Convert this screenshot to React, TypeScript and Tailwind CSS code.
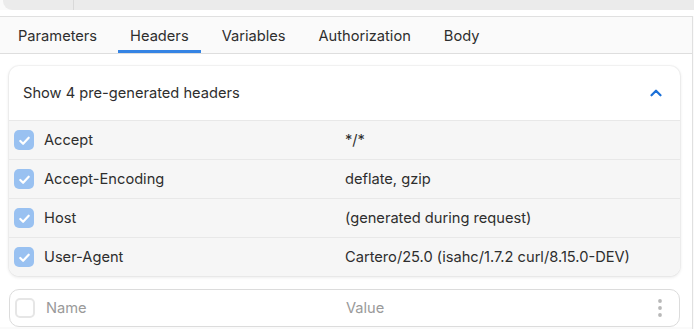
import React from 'react';
import { ChevronUp } from 'lucide-react';

// ─── Data ───────────────────────────────────────────────────────────────────

const tabs = ['Parameters', 'Headers', 'Variables', 'Authorization', 'Body'];

const generated = [
  { name: 'Accept', value: '*/*' },
  { name: 'Accept-Encoding', value: 'deflate, gzip' },
  { name: 'Host', value: '(generated during request)' },
  { name: 'User-Agent', value: 'Cartero/25.0 (isahc/1.7.2 curl/8.15.0-DEV)' },
];

// ─── Bits ───────────────────────────────────────────────────────────────────

function CheckBox({ checked }: { checked: boolean }) {
  if (!checked) {
    return <div className="h-5 w-5 shrink-0 rounded-[5px] border-2 border-[#e6e6e6] bg-white" />;
  }
  return (
    <div className="flex h-5 w-5 shrink-0 items-center justify-center rounded-[5px] bg-[#99c1f1]">
      <svg viewBox="0 0 16 16" className="h-[15px] w-[15px]" fill="none">
        <path d="M3.5 8.5l3 3 6-6.5" stroke="white" strokeWidth="2.3" strokeLinecap="round" strokeLinejoin="round" />
      </svg>
    </div>
  );
}

function Kebab() {
  return (
    <svg viewBox="0 0 6 20" className="h-5 w-[6px]" fill="#b8b8b8">
      <circle cx="3" cy="3" r="1.9" />
      <circle cx="3" cy="10" r="1.9" />
      <circle cx="3" cy="17" r="1.9" />
    </svg>
  );
}

// ─── App ────────────────────────────────────────────────────────────────────

export default function App() {
  return (
    <div
      className="flex h-[329px] w-[694px] flex-col overflow-hidden bg-[#fafafa] text-[14.65px] text-[#2e2e2e]"
      style={{ fontFamily: 'Inter, "Noto Sans", sans-serif' }}
    >
      {/* URL bar, scrolled mostly out of view */}
      <div className="flex h-[10px] shrink-0 pl-[3px]">
        <div className="flex flex-1 rounded-bl-[9px] bg-[#ebebeb]">
          <div className="w-[71px] border-r border-[#d9d9d9]" />
        </div>
      </div>
      <div className="h-[6px] shrink-0 bg-white" />

      {/* Main pane */}
      <div className="flex min-h-0 w-[693px] flex-1 flex-col border-r border-t border-[#e0e0e0]">
        {/* Tabs */}
        <div className="flex h-[37px] shrink-0 items-stretch gap-[9px] border-b border-[#dedede] bg-[#fafafa] pl-[6px]">
          {tabs.map((t) => (
            <div
              key={t}
              className={
                t === 'Headers'
                  ? 'flex items-center border-b-[3px] border-[#3584e4] px-3 pt-[7px]'
                  : 'flex items-center px-3 pt-[4px]'
              }
            >
              {t}
            </div>
          ))}
        </div>

        {/* Content */}
        <div className="flex flex-col gap-[13px] bg-white px-[9px] pr-[12px] pt-[12px]">
          {/* Pre-generated headers */}
          <div className="overflow-hidden rounded-[10px] bg-white shadow-[0_0_0_1px_rgba(0,0,0,0.03),0_1px_3px_1px_rgba(0,0,0,0.07)]">
            <div className="flex h-[54px] items-center justify-between pl-[14px] pr-[15px]">
              <span className="pt-[2px]">Show 4 pre-generated headers</span>
              <ChevronUp className="h-[18px] w-[18px] text-[#1c71d8]" strokeWidth={3} />
            </div>
            {generated.map((h) => (
              <div key={h.name} className="flex h-[39px] items-center border-t border-[#e8e8e8] bg-[#f6f6f6] pl-[5px]">
                <CheckBox checked />
                <span className="ml-[10px] w-[301px] pt-[2px]">{h.name}</span>
                <span className="pt-[2px]">{h.value}</span>
              </div>
            ))}
          </div>

          {/* New header row */}
          <div className="flex h-[38px] items-center rounded-[10px] border border-[#dcdcdc] bg-white pl-[5px] pr-[16px]">
            <CheckBox checked={false} />
            <span className="ml-[11px] w-[300px] pt-[2px] text-[#9a9a9a]">Name</span>
            <span className="flex-1 pt-[2px] text-[#9a9a9a]">Value</span>
            <Kebab />
          </div>
        </div>
      </div>
    </div>
  );
}
